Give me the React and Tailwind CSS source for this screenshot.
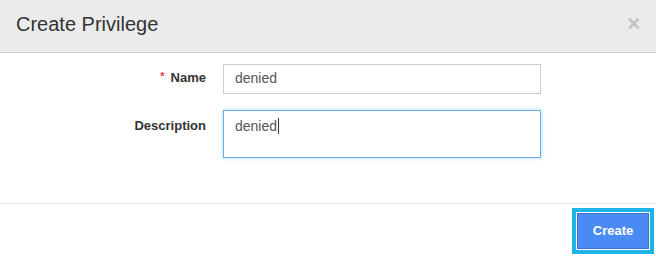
export default function App() {
  return (
    <div className="w-[656px] h-[256px] bg-white font-['Liberation_Sans',Arial,sans-serif] text-[#333] overflow-hidden">
      {/* header */}
      <div className="h-[53px] bg-[#ebebeb] border-b border-[#cfcfcf] flex items-center justify-between pl-4 pr-[16px]">
        <h2 className="text-[20px] leading-none text-[#333] -mt-[4px]">Create Privilege</h2>
        <span className="text-[22px] leading-none font-bold text-[#c4c4c4] -mt-[4px]">×</span>
      </div>

      {/* body */}
      <div className="h-[151px] border-b border-[#e5e5e5] pt-[11px]">
        <div className="flex items-center">
          <label className="w-[206px] text-right text-[13px] font-bold text-[#333] -mt-[2px]">
            <span className="text-[#e5334a] text-[11px] align-top mr-[6px]">*</span>Name
          </label>
          <div className="ml-[17px] w-[318px] h-[30px] border border-[#cccccc] px-[11px] flex items-center text-[14px] text-[#555] pb-px">
            denied
          </div>
        </div>
        <div className="flex items-start mt-[16px]">
          <label className="w-[206px] text-right text-[13px] font-bold text-[#333] pt-[6px]">
            Description
          </label>
          <div className="ml-[17px] w-[318px] h-[48px] border border-[#66afe9] shadow-[0_0_4px_rgba(102,175,233,0.5)] px-[11px] pt-[5px] text-[14px] text-[#555]">
            <span className="border-r border-[#333] pr-px">denied</span>
          </div>
        </div>
      </div>

      {/* footer */}
      <div className="flex justify-end pr-[2px] pt-[4px]">
        <div className="border-[4px] border-[#1eb4e6] p-px">
          <button className="w-[72px] h-[36px] bg-[#4a8af4] border border-[#3a70d8] text-white text-[13px] font-bold">
            Create
          </button>
        </div>
      </div>
    </div>
  );
}
